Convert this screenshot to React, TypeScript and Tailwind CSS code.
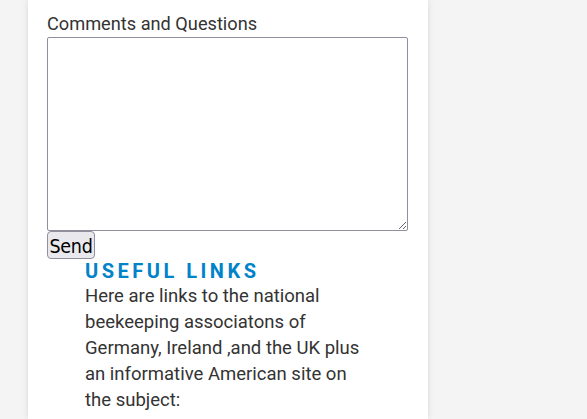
export default function App() {
  return (
    <div className="min-h-[419px] h-[419px] overflow-hidden bg-[#f4f4f4] font-['Roboto',sans-serif] text-[#333]">
      <div className="ml-[28px] w-[400px] h-full bg-white shadow-[0_0_6px_rgba(0,0,0,0.12)] pl-[19px] pt-[12px]">
        {/* Comment form */}
        <label className="block text-[18.2px] leading-[24px] mb-[1px]">Comments and Questions</label>
        <textarea className="block w-[361px] h-[194px] border border-[#8f8f9d] rounded-[2px] bg-white resize-y" />
        <button className="block w-[48px] h-[28px] pt-[3px] bg-[#e9e9ed] border border-[#8f8f9d] rounded-[4px] font-['DejaVu_Sans_Condensed','DejaVu_Sans',sans-serif] text-[19.5px] leading-none text-black tracking-[-0.3px]">
          Send
        </button>

        {/* Useful links */}
        <div className="ml-[38px] mt-[1px] w-[284px]">
          <h2 className="text-[20px] leading-[23px] font-bold tracking-[3.5px] text-[#0083c9]">USEFUL LINKS</h2>
          <p className="text-[18.5px] leading-[26px]">
            Here are links to the national beekeeping associatons of Germany, Ireland ,and the UK plus an informative American site on the subject:
          </p>
        </div>
      </div>
    </div>
  )
}
